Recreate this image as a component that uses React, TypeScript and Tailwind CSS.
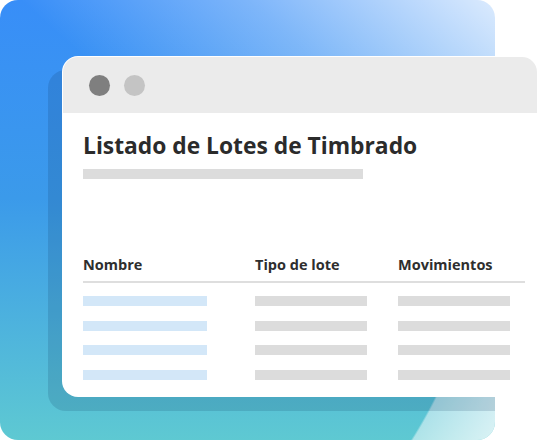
const rows = [0, 1, 2, 3];

export default function App() {
  return (
    <div className="relative w-[540px] h-[440px] overflow-hidden bg-white font-['Open_Sans',sans-serif]">
      {/* back card */}
      <div className="relative w-[495px] h-[440px] rounded-[18px] overflow-hidden bg-[linear-gradient(to_bottom_left,rgba(255,255,255,0.82)_0%,rgba(255,255,255,0.35)_25%,rgba(255,255,255,0)_48%),linear-gradient(to_bottom,#388ef8_0%,#3b9aea_45%,#5ec9d2_100%)]">
        <div className="absolute left-0 top-[330px] w-full h-[110px] bg-[radial-gradient(circle_at_0px_-150px,transparent_486px,rgba(255,255,255,0.5)_488px,rgba(255,255,255,0.82)_570px)]" />
        <div className="absolute left-[48px] top-[70px] w-[476px] h-[341px] rounded-[18px] bg-[rgba(10,40,80,0.15)]" />
      </div>

      {/* window */}
      <div className="absolute left-[62px] top-[56px] w-[476px] h-[341px] rounded-[16px] overflow-hidden bg-white border border-white/70">
        <div className="h-[56px] bg-[#ebebeb] flex items-center pl-[26px] gap-[14px]">
          <span className="w-[21px] h-[21px] rounded-full bg-[#7f7f7f]" />
          <span className="w-[21px] h-[21px] rounded-full bg-[#c4c4c4]" />
        </div>

        <div className="pl-[20px] pr-[12px]">
          <h1 className="mt-[17px] text-[22.8px] leading-[31px] font-bold text-[#2b2b2b]">
            Listado de Lotes de Timbrado
          </h1>
          <div className="mt-[8px] w-[280px] h-[10px] bg-[#dcdcdc]" />

          <div className="mt-[76px] grid grid-cols-[172px_143px_1fr] pb-[6px] border-b-2 border-[#dedede] text-[14.5px] leading-[20px] font-bold text-[#2e2e2e]">
            <span>Nombre</span>
            <span>Tipo de lote</span>
            <span>Movimientos</span>
          </div>

          <div className="mt-[13px] flex flex-col gap-[14.5px]">
            {rows.map((r) => (
              <div key={r} className="grid grid-cols-[172px_143px_1fr]">
                <div className="w-[124px] h-[10px] bg-[#d3e7f8]" />
                <div className="w-[112px] h-[10px] bg-[#dcdcdc]" />
                <div className="w-[112px] h-[10px] bg-[#dcdcdc]" />
              </div>
            ))}
          </div>
        </div>
      </div>
    </div>
  );
}
